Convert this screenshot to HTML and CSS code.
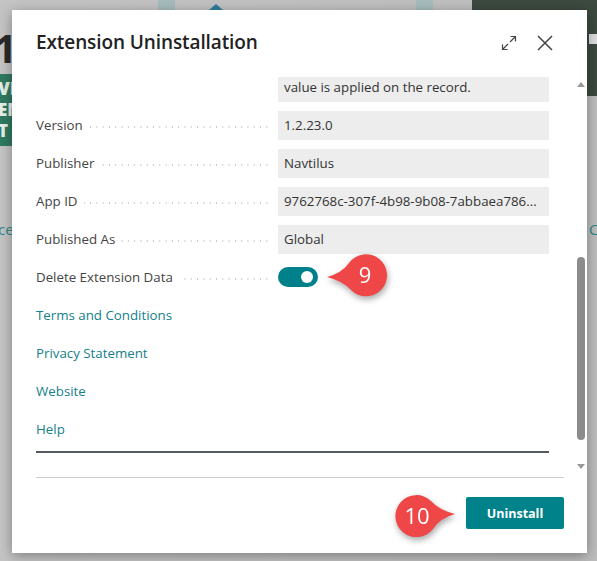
FILE: index.html
```html
<!DOCTYPE html>
<html>
<head>
<meta charset="utf-8">
<link rel="stylesheet" href="styles.css">
</head>
<body>
<div class="backdrop">
  <div class="bg-top-teal1"></div>
  <div class="bg-top-tri"></div>
  <div class="bg-top-teal2"></div>
  <div class="bg-dark"></div>
  <div class="bg-dark-side"><span class="bg-d"></span></div>
  <div class="bg-one">1</div>
  <div class="bg-green"><span>VI</span><span>EM</span><span>T</span></div>
  <div class="bg-ce">ce</div>
  <div class="bg-c">C</div>
</div>

<div class="dialog">
  <div class="header">
    <h1 class="title">Extension Uninstallation</h1>
    <div class="header-icons">
      <svg class="icon" width="16" height="16" viewBox="0 0 16 16"><path d="M9.5 1.5h5v5M14.5 1.5l-5.5 5.5M6.5 14.5h-5v-5M1.5 14.5l5.5-5.5" fill="none" stroke="#444" stroke-width="1.2"/></svg>
      <svg class="icon" width="18" height="18" viewBox="0 0 18 18"><path d="M2 2l14 14M16 2L2 16" fill="none" stroke="#444" stroke-width="1.5"/></svg>
    </div>
  </div>

  <div class="scroll">
    <div class="content">
      <div class="inner">
        <div class="row"><div class="label"></div><div class="value">value is applied on the record.</div></div>
        <div class="row"><div class="label"><span>Version</span></div><div class="value">1.2.23.0</div></div>
        <div class="row"><div class="label"><span>Publisher</span></div><div class="value">Navtilus</div></div>
        <div class="row"><div class="label"><span>App ID</span></div><div class="value">9762768c-307f-4b98-9b08-7abbaea786...</div></div>
        <div class="row"><div class="label"><span>Published As</span></div><div class="value">Global</div></div>
        <div class="row"><div class="label"><span>Delete Extension Data</span></div><div class="toggle-cell"><div class="toggle"><div class="knob"></div></div></div></div>
        <div class="link-row"><a class="link">Terms and Conditions</a></div>
        <div class="link-row"><a class="link">Privacy Statement</a></div>
        <div class="link-row"><a class="link">Website</a></div>
        <div class="link-row"><a class="link">Help</a></div>
        <div class="dark-line"></div>
      </div>
    </div>
    <div class="scrollbar">
      <div class="arrow-up"></div>
      <div class="track"><div class="thumb"></div></div>
      <div class="arrow-down"></div>
    </div>
  </div>

  <div class="footer">
    <button class="btn">Uninstall</button>
  </div>
</div>

<svg class="callout callout-9" width="70" height="50" viewBox="0 0 70 50">
  <path d="M4 26 Q19 22 26 12 A21 21 0 1 1 28 39 Q20 30 4 26 Z" fill="#ef4748"/>
  <text x="42" y="32" text-anchor="middle" class="callout-text">9</text>
</svg>
<svg class="callout callout-10" width="74" height="50" viewBox="0 0 74 50">
  <path d="M70 22 Q55 26 48 37 A21 21 0 1 1 46 9 Q54 18 70 22 Z" fill="#ef4748"/>
  <text x="32" y="32" text-anchor="middle" class="callout-text">10</text>
</svg>
</body>
</html>
```

FILE: styles.css
```css
html, body {
  margin: 0;
  padding: 0;
}
body {
  width: 597px;
  height: 561px;
  overflow: hidden;
  background: #b9b9b9;
  font-family: "Open Sans", "Noto Sans", sans-serif;
  position: relative;
  padding: 10px 0 0 12px;
  box-sizing: border-box;
}
.backdrop {
  position: absolute;
  inset: 0;
  background: linear-gradient(90deg, #c4c4c4 0%, #bdbdbd 100%);
}
.bg-top-teal1 { position: absolute; left: 158px; top: 0; width: 17px; height: 10px; background: #a6bcbc; }
.bg-top-tri { position: absolute; left: 209px; top: 4px; width: 0; height: 0; border-left: 7px solid transparent; border-right: 7px solid transparent; border-bottom: 6px solid #2e7f98; }
.bg-top-teal2 { position: absolute; left: 416px; top: 0; width: 17px; height: 10px; background: #a6bcbc; }
.bg-dark { position: absolute; left: 472px; top: 0; width: 125px; height: 10px; background: #3d4a40; }
.bg-dark-side { position: absolute; left: 587px; top: 0; width: 10px; height: 96px; background: #3d4a40; }
.bg-d { position: absolute; left: 2px; top: 34px; background: #ddd; width: 8px; height: 10px; display: block; }
.bg-one { position: absolute; left: -6px; top: 28px; font: bold 40px "Open Sans", sans-serif; color: #2a2a2a; line-height: 40px; }
.bg-green { position: absolute; left: 0; top: 74px; width: 12px; height: 72px; background: #2f7a60; display: flex; flex-direction: column; font: 800 17px "Open Sans", sans-serif; color: #e6efe9; line-height: 21px; overflow: hidden; padding-top: 4px; box-sizing: border-box; }
.bg-green span { margin-left: -2px; }
.bg-ce { position: absolute; left: -2px; top: 219px; font: 15px "Open Sans", sans-serif; color: #2b8a8a; }
.bg-c { position: absolute; left: 589px; top: 219px; font: 15px "Open Sans", sans-serif; color: #2b8a8a; }

.dialog {
  position: relative;
  width: 575px;
  height: 543px;
  background: #fff;
  box-shadow: 0 3px 12px rgba(0,0,0,0.35);
  display: flex;
  flex-direction: column;
}
.header {
  height: 67px;
  display: flex;
  align-items: flex-start;
  justify-content: space-between;
  padding: 0 33px 0 24px;
  box-sizing: border-box;
}
.title {
  margin: 19px 0 0 0;
  font-size: 19px;
  font-weight: 600;
  color: #222;
  letter-spacing: -0.1px;
}
.header-icons {
  display: flex;
  align-items: center;
  gap: 19px;
  margin-top: 24px;
}
.icon { display: block; }

.scroll {
  height: 395px;
  display: flex;
  flex-direction: row;
}
.content {
  width: 537px;
  padding-left: 24px;
  box-sizing: border-box;
  overflow: hidden;
}
.inner {
  margin-top: -9px;
  width: 513px;
}
.row {
  display: flex;
  align-items: center;
  height: 38px;
}
.label {
  width: 242px;
  height: 29px;
  display: flex;
  align-items: center;
  font-size: 13.3px;
  color: #444;
  position: relative;
}
.label span {
  background: #fff;
  padding-right: 6px;
  position: relative;
  z-index: 1;
}
.label::after {
  content: "";
  position: absolute;
  left: 0;
  right: 8px;
  top: 15px;
  height: 2px;
  background-image: radial-gradient(circle, #c8c8c8 0.8px, transparent 1px);
  background-size: 6.3px 2px;
  background-position: right center;
}
.row:first-child .label::after { display: none; }
.value {
  width: 271px;
  height: 29px;
  background: #ededed;
  font-size: 13.3px;
  color: #333;
  line-height: 29px;
  padding-left: 6px;
  box-sizing: border-box;
  white-space: nowrap;
  overflow: hidden;
}
.toggle-cell {
  width: 271px;
  display: flex;
  align-items: center;
}
.toggle {
  width: 40px;
  height: 20px;
  border-radius: 10px;
  background: #00808a;
  position: relative;
}
.knob {
  position: absolute;
  right: 5px;
  top: 4px;
  width: 12px;
  height: 12px;
  border-radius: 50%;
  background: #fff;
}
.link-row {
  height: 38px;
  display: flex;
  align-items: center;
}
.link {
  font-size: 13.3px;
  color: #15808a;
  text-decoration: none;
}
.dark-line {
  margin-top: 3px;
  height: 1.5px;
  background: #555a60;
}

.scrollbar {
  width: 12px;
  margin-left: 26px;
  display: flex;
  flex-direction: column;
  align-items: center;
}
.arrow-up {
  margin-top: 5px;
  width: 0; height: 0;
  border-left: 4px solid transparent;
  border-right: 4px solid transparent;
  border-bottom: 5px solid #999;
}
.track {
  flex: 1;
  width: 100%;
  display: flex;
  justify-content: center;
  padding-top: 170px;
  padding-bottom: 24px;
  box-sizing: border-box;
}
.thumb {
  width: 8px;
  height: 100%;
  background: #8c8c8c;
  border-radius: 4px;
}
.arrow-down {
  margin-bottom: 3px;
  width: 0; height: 0;
  border-left: 4px solid transparent;
  border-right: 4px solid transparent;
  border-top: 5px solid #999;
}

.footer {
  margin: 5px 23px 0 24px;
  border-top: 1px solid #cfcfcf;
  flex: 1;
  display: flex;
  justify-content: flex-end;
  align-items: flex-start;
}
.btn {
  margin-top: 19px;
  width: 98px;
  height: 32px;
  border: none;
  border-radius: 2px;
  background: #00828a;
  color: #fff;
  font-family: "Open Sans", sans-serif;
  font-weight: 700;
  font-size: 12.5px;
}

.callout {
  position: absolute;
  filter: drop-shadow(1px 3px 3px rgba(0,0,0,0.35));
  overflow: visible;
}
.callout-9 { left: 323px; top: 251px; }
.callout-10 { left: 385px; top: 492px; }
.callout-text {
  fill: #fff;
  font-family: "Open Sans", sans-serif;
  font-size: 22px;
}
```
